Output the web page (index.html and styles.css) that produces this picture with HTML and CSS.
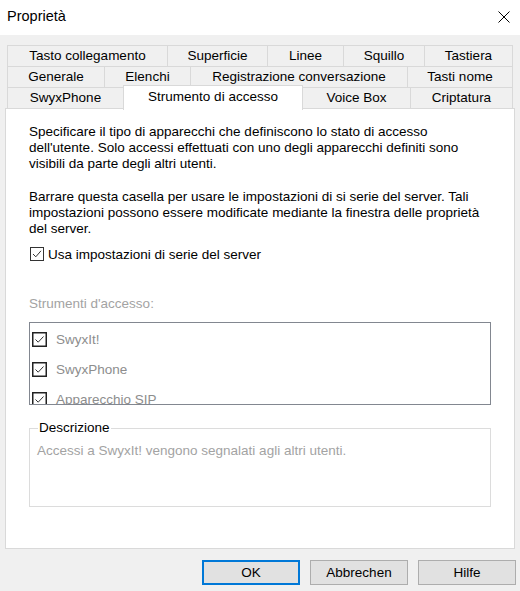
FILE: index.html
```html
<!DOCTYPE html>
<html lang="it">
<head>
<meta charset="utf-8">
<title>Proprietà</title>
<link rel="stylesheet" href="styles.css">
</head>
<body>
<div class="dialog">
  <div class="titlebar">
    <span class="title">Proprietà</span>
    <svg class="close" width="12" height="12" viewBox="0 0 12 12"><path d="M0.5 0.5 L11.5 11.5 M11.5 0.5 L0.5 11.5" stroke="#000" stroke-width="1" fill="none"/></svg>
  </div>
  <div class="tabs">
    <div class="tabrow row1">
      <div class="tab">Tasto collegamento</div>
      <div class="tab">Superficie</div>
      <div class="tab">Linee</div>
      <div class="tab">Squillo</div>
      <div class="tab last">Tastiera</div>
    </div>
    <div class="tabrow row2">
      <div class="tab">Generale</div>
      <div class="tab">Elenchi</div>
      <div class="tab">Registrazione conversazione</div>
      <div class="tab last">Tasti nome</div>
    </div>
    <div class="tabrow row3">
      <div class="tab">SwyxPhone</div>
      <div class="tab selected">Strumento di accesso</div>
      <div class="tab">Voice Box</div>
      <div class="tab last">Criptatura</div>
    </div>
  </div>
  <div class="panel">
    <p class="para p1">Specificare il tipo di apparecchi che definiscono lo stato di accesso dell'utente. Solo accessi effettuati con uno degli apparecchi definiti sono visibili da parte degli altri utenti.</p>
    <p class="para p2">Barrare questa casella per usare le impostazioni di si serie del server. Tali impostazioni possono essere modificate mediante la finestra delle proprietà del server.</p>
    <div class="check-row">
      <svg class="cb" width="14" height="14" viewBox="0 0 14 14"><rect x="0.5" y="0.5" width="13" height="13" fill="#fff" stroke="#333"/><path d="M3 7 L5.8 9.8 L11 3.8" stroke="#333" stroke-width="1" fill="none"/></svg>
      <span>Usa impostazioni di serie del server</span>
    </div>
    <div class="label-disabled">Strumenti d'accesso:</div>
    <div class="listbox">
      <div class="item">
        <svg class="cb" width="15" height="15" viewBox="0 0 15 15"><rect x="0.75" y="0.75" width="13.5" height="13.5" fill="#fff" stroke="#222" stroke-width="1.5"/><path d="M3.5 7.5 L6.2 10.2 L11.5 4.5" stroke="#333" stroke-width="1" fill="none"/></svg>
        <span>SwyxIt!</span>
      </div>
      <div class="item">
        <svg class="cb" width="15" height="15" viewBox="0 0 15 15"><rect x="0.75" y="0.75" width="13.5" height="13.5" fill="#fff" stroke="#222" stroke-width="1.5"/><path d="M3.5 7.5 L6.2 10.2 L11.5 4.5" stroke="#333" stroke-width="1" fill="none"/></svg>
        <span>SwyxPhone</span>
      </div>
      <div class="item">
        <svg class="cb" width="15" height="15" viewBox="0 0 15 15"><rect x="0.75" y="0.75" width="13.5" height="13.5" fill="#fff" stroke="#222" stroke-width="1.5"/><path d="M3.5 7.5 L6.2 10.2 L11.5 4.5" stroke="#333" stroke-width="1" fill="none"/></svg>
        <span>Apparecchio SIP</span>
      </div>
    </div>
    <fieldset class="group">
      <legend>Descrizione</legend>
      <div class="desc">Accessi a SwyxIt! vengono segnalati agli altri utenti.</div>
    </fieldset>
  </div>
  <div class="buttons">
    <div class="btn default">OK</div>
    <div class="btn">Abbrechen</div>
    <div class="btn">Hilfe</div>
  </div>
</div>
</body>
</html>
```
FILE: styles.css
```css
html, body {
  margin: 0;
  padding: 0;
  background: #f0f0f0;
}
body {
  font-family: "Liberation Sans", Arial, sans-serif;
  font-size: 13.5px;
  color: #000;
}
.dialog {
  width: 520px;
  height: 591px;
  display: flex;
  flex-direction: column;
  overflow: hidden;
}
.titlebar {
  height: 35px;
  background: #fff;
  display: flex;
  align-items: center;
  justify-content: space-between;
  padding: 0 10px 3px 7px;
  box-sizing: border-box;
}
.title {
  font-size: 14.5px;
}
.close {
  display: block;
  margin-top: 2px;
}
.tabs {
  margin-top: 10px;
  padding-left: 7px;
  display: flex;
  flex-direction: column;
}
.tabrow {
  display: grid;
  height: 21px;
}
.row1 { grid-template-columns: 160px 100px 76px 81px 89px; }
.row2 { grid-template-columns: 97px 86px 217px 106px; }
.row3 { grid-template-columns: 116px 180px 107px 103px; }
.tab {
  border-top: 1px solid #d9d9d9;
  border-left: 1px solid #d9d9d9;
  background: #f0f0f0;
  display: flex;
  align-items: center;
  justify-content: center;
  line-height: 20px;
  white-space: nowrap;
}
.tab.last {
  border-right: 1px solid #d9d9d9;
}
.tab.selected {
  background: #fff;
  border-right: 1px solid #d9d9d9;
  margin-top: -2px;
  margin-bottom: -2px;
  position: relative;
  z-index: 2;
  align-items: flex-start;
  padding-top: 1px;
}
.tab.selected + .tab {
  border-left: none;
}
.panel {
  margin-left: 5px;
  width: 510px;
  height: 441px;
  box-sizing: border-box;
  background: #fff;
  border: 1px solid #d9d9d9;
  padding: 15px 23px 0 23px;
  position: relative;
  z-index: 1;
}
.para {
  margin: 0;
  line-height: 16px;
}
.p2 {
  margin-top: 17px;
}
.check-row {
  margin-top: 9px;
  display: flex;
  align-items: center;
  gap: 4px;
  height: 16px;
  margin-left: 1px;
}
.cb {
  display: block;
  flex: none;
}
.label-disabled {
  margin-top: 34px;
  line-height: 16px;
  color: #a3a3a3;
}
.listbox {
  margin-top: 10px;
  width: 462px;
  height: 83px;
  box-sizing: border-box;
  border: 1px solid #828790;
  overflow: hidden;
  padding: 9px 0 0 2px;
}
.item {
  display: flex;
  align-items: center;
  gap: 9px;
  height: 15px;
  margin-bottom: 15px;
  color: #8d8d8d;
}
.item span {
  line-height: 16px;
}
.group {
  margin: 15px 0 0 0;
  width: 462px;
  height: 87px;
  box-sizing: border-box;
  border: 1px solid #dcdcdc;
  padding: 7px 7px 0 7px;
}
.group legend {
  padding: 0 1px;
  margin-left: 1px;
  line-height: 16px;
}
.desc {
  color: #a3a3a3;
  line-height: 16px;
}
.buttons {
  margin-top: 11px;
  display: flex;
  justify-content: flex-end;
  gap: 10px;
  padding-right: 4px;
}
.btn {
  width: 98px;
  height: 25px;
  box-sizing: border-box;
  background: #e1e1e1;
  border: 1px solid #adadad;
  display: flex;
  align-items: center;
  justify-content: center;
}
.btn.default {
  border: 2px solid #0078d7;
}
```
